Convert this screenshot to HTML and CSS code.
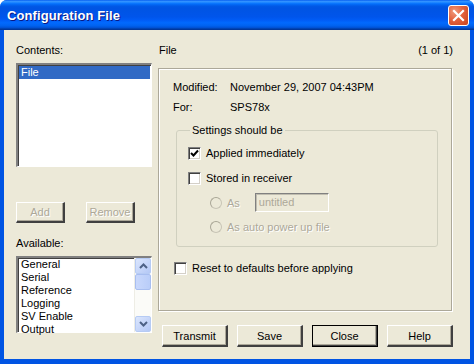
FILE: index.html
```html
<!DOCTYPE html>
<html lang="en">
<head>
  <meta charset="UTF-8">
  <title>Configuration File</title>
  <link rel="stylesheet" href="styles.css">
</head>
<body>
  <div class="window">
    <div class="titlebar">
      <span class="title">Configuration File</span>
      <button class="close-btn" aria-label="Close">
        <svg width="13" height="13" viewBox="0 0 13 13"><path d="M2 2 L11 11 M11 2 L2 11" stroke="#fff" stroke-width="2.2" stroke-linecap="square"/></svg>
      </button>
    </div>

    <div class="client">
      <div class="left-col">
        <div class="label">Contents:</div>
        <div class="listbox contents">
          <div class="item selected">File</div>
        </div>
        <div class="add-row">
          <button class="btn small" disabled>Add</button>
          <button class="btn small" disabled>Remove</button>
        </div>
        <div class="label available">Available:</div>
        <div class="listbox available-list">
          <div class="items">
            <div class="item">General</div>
            <div class="item">Serial</div>
            <div class="item">Reference</div>
            <div class="item">Logging</div>
            <div class="item">SV Enable</div>
            <div class="item">Output</div>
          </div>
          <div class="scrollbar">
            <div class="sb-btn">
              <svg width="9" height="6" viewBox="0 0 9 6"><path d="M1 5 L4.5 1.5 L8 5" fill="none" stroke="#4d6185" stroke-width="2"/></svg>
            </div>
            <div class="sb-thumb"></div>
            <div class="sb-track"></div>
            <div class="sb-btn">
              <svg width="9" height="6" viewBox="0 0 9 6"><path d="M1 1 L4.5 4.5 L8 1" fill="none" stroke="#4d6185" stroke-width="2"/></svg>
            </div>
          </div>
        </div>
      </div>

      <div class="right-col">
        <div class="header-row">
          <span>File</span>
          <span>(1 of 1)</span>
        </div>
        <div class="panel">
          <div class="info-row"><span class="info-key">Modified:</span><span>November 29, 2007 04:43PM</span></div>
          <div class="info-row"><span class="info-key">For:</span><span>SPS78x</span></div>

          <fieldset class="group">
            <legend>Settings should be</legend>
            <label class="check-row">
              <span class="checkbox checked">
                <svg width="9" height="9" viewBox="0 0 9 9"><path d="M1 4 L3.5 6.5 L8 1.5" fill="none" stroke="#000" stroke-width="2"/></svg>
              </span>
              Applied immediately
            </label>
            <label class="check-row">
              <span class="checkbox"></span>
              Stored in receiver
            </label>
            <div class="radio-row disabled">
              <span class="radio"></span>
              <span class="radio-label">As</span>
              <span class="textfield">untitled</span>
            </div>
            <div class="radio-row disabled second">
              <span class="radio"></span>
              <span class="radio-label">As auto power up file</span>
            </div>
          </fieldset>

          <label class="check-row reset">
            <span class="checkbox"></span>
            Reset to defaults before applying
          </label>
        </div>

        <div class="button-row">
          <button class="btn">Transmit</button>
          <button class="btn">Save</button>
          <button class="btn default">Close</button>
          <button class="btn">Help</button>
        </div>
      </div>
    </div>
  </div>
</body>
</html>
```

FILE: styles.css
```css
body {
  margin: 0;
  width: 474px;
  height: 364px;
  overflow: hidden;
  background: #fff;
  font-family: "Liberation Sans", Arial, sans-serif;
  font-size: 11px;
  color: #000;
}
.window {
  width: 474px;
  height: 364px;
  display: flex;
  flex-direction: column;
  background: #0054e3;
  border-radius: 7px 7px 0 0;
  box-sizing: border-box;
  overflow: hidden;
}
.titlebar {
  height: 30px;
  flex: none;
  display: flex;
  align-items: center;
  justify-content: space-between;
  padding: 0 5px 0 7px;
  background: linear-gradient(to bottom, #0058ee 0%, #3593ff 4%, #288eff 7%, #127dff 10%, #036ffc 13%, #0262ee 17%, #0057e5 22%, #0054e3 28%, #0055eb 56%, #005bf5 66%, #026afe 76%, #0062ef 86%, #0052d6 92%, #0040ab 96%, #003092 100%);
}
.title {
  color: #fff;
  font-weight: bold;
  font-size: 13px;
  text-shadow: 1px 1px 0 #0a1883;
  letter-spacing: 0.1px;
}
.close-btn {
  width: 21px;
  height: 21px;
  padding: 0;
  border: 1px solid #fff;
  border-radius: 3px;
  background: radial-gradient(circle at 30% 30%, #f19a7c 0%, #e2623e 45%, #c7421c 100%);
  display: flex;
  align-items: center;
  justify-content: center;
  margin-top: 1px;
}
.client {
  flex: 1;
  margin: 0 4px 5px 4px;
  background: #ece9d8;
  display: flex;
  padding: 14px 17px 0 12px;
  gap: 6px;
}
.left-col {
  width: 136px;
  display: flex;
  flex-direction: column;
}
.label {
  line-height: 13px;
  height: 13px;
}
.label.available {
  margin-top: 14px;
}
.listbox {
  margin-top: 6px;
  background: #fff;
  border-style: solid;
  border-width: 2px 1px 1px 2px;
  border-color: #808080 #fff #fff #808080;
  box-shadow: inset 1px 1px 0 #404040;
  box-sizing: border-box;
}
.listbox.contents {
  height: 104px;
  padding: 1px;
}
.item {
  line-height: 13px;
  height: 13px;
  padding-left: 2px;
}
.item.selected {
  background: #316ac5;
  color: #fff;
}
.add-row {
  margin-top: 35px;
  display: flex;
  gap: 21px;
}
.btn {
  font-family: "Liberation Sans", Arial, sans-serif;
  font-size: 11px;
  background: #ece9d8;
  color: #000;
  border-style: solid;
  border-width: 1px 2px 2px 1px;
  border-color: #fff #404040 #404040 #fff;
  box-shadow: inset -1px -1px 0 #aca899;
  width: 66px;
  height: 22px;
  padding: 0;
}
.btn.small {
  width: 49px;
  height: 21px;
}
.btn:disabled {
  color: #aca899;
  text-shadow: 1px 1px 0 #fff;
}
.btn.default {
  outline: 1px solid #000;
  outline-offset: -1px;
  border-color: #fff #404040 #404040 #fff;
}
.listbox.available-list {
  height: 77px;
  display: flex;
}
.items {
  flex: 1;
  padding: 0 0 0 1px;
}
.scrollbar {
  width: 16px;
  display: flex;
  flex-direction: column;
  background: #fbfbf8;
  border-left: 1px solid #eeede5;
}
.sb-btn {
  height: 16px;
  background: linear-gradient(135deg, #dbe6fd, #b4c8f6);
  border: 1px solid #b6cbf4;
  border-radius: 2px;
  box-sizing: border-box;
  display: flex;
  align-items: center;
  justify-content: center;
}
.sb-thumb {
  height: 16px;
  background: linear-gradient(90deg, #c9d8fc, #b9cdf9);
  border: 1px solid #a8bef0;
  border-radius: 2px;
  box-sizing: border-box;
}
.sb-track {
  flex: 1;
}
.right-col {
  width: 295px;
  display: flex;
  flex-direction: column;
}
.header-row {
  display: flex;
  justify-content: space-between;
  line-height: 13px;
  height: 13px;
  padding-left: 1px;
}
.panel {
  margin-top: 11px;
  width: 294px;
  height: 243px;
  box-sizing: border-box;
  border: 1px solid #aca899;
  box-shadow: inset 1px 1px 0 #fff, 1px 1px 0 #fff;
  padding: 12px 0 0 14px;
}
.info-row {
  display: flex;
  line-height: 13px;
  height: 13px;
  margin-bottom: 7px;
}
.info-key {
  width: 57px;
}
.group {
  margin: 10px 0 0 3px;
  width: 262px;
  height: 123px;
  box-sizing: border-box;
  border: 1px solid #d0d0bf;
  border-radius: 3px;
  padding: 10px 0 0 11px;
}
.group legend {
  padding: 0 2px;
  margin-left: 2px;
  line-height: 13px;
}
.check-row {
  display: flex;
  align-items: center;
  gap: 5px;
  height: 13px;
  line-height: 13px;
  margin-bottom: 12px;
}
.checkbox {
  width: 13px;
  height: 13px;
  box-sizing: border-box;
  background: #fff;
  border-style: solid;
  border-width: 1px;
  border-color: #808080 #fff #fff #808080;
  box-shadow: inset 1px 1px 0 #404040, inset -1px -1px 0 #d4d0c8;
  display: flex;
  align-items: center;
  justify-content: center;
}
.radio-row {
  display: flex;
  align-items: center;
  padding-left: 22px;
  height: 19px;
  margin-top: -4px;
  color: #aca899;
}
.radio-row.second {
  margin-top: 8px;
  height: 13px;
}
.radio {
  width: 12px;
  height: 12px;
  border-radius: 50%;
  box-sizing: border-box;
  border: 1px solid #c8c5b6;
  border-top-color: #a9a696;
  border-left-color: #a9a696;
  background: #ece9d8;
  margin-right: 5px;
}
.radio-label {
  text-shadow: 1px 1px 0 #fff;
}
.textfield {
  margin-left: 15px;
  width: 74px;
  height: 19px;
  box-sizing: border-box;
  border-style: solid;
  border-width: 1px;
  border-color: #808080 #fff #fff #808080;
  box-shadow: inset 1px 1px 0 #c0bdb0;
  line-height: 16px;
  padding-left: 3px;
  color: #aca899;
}
.check-row.reset {
  margin-top: 15px;
  margin-left: 1px;
}
.button-row {
  margin-top: 14px;
  display: flex;
  gap: 9px;
  padding-left: 4px;
}
```
